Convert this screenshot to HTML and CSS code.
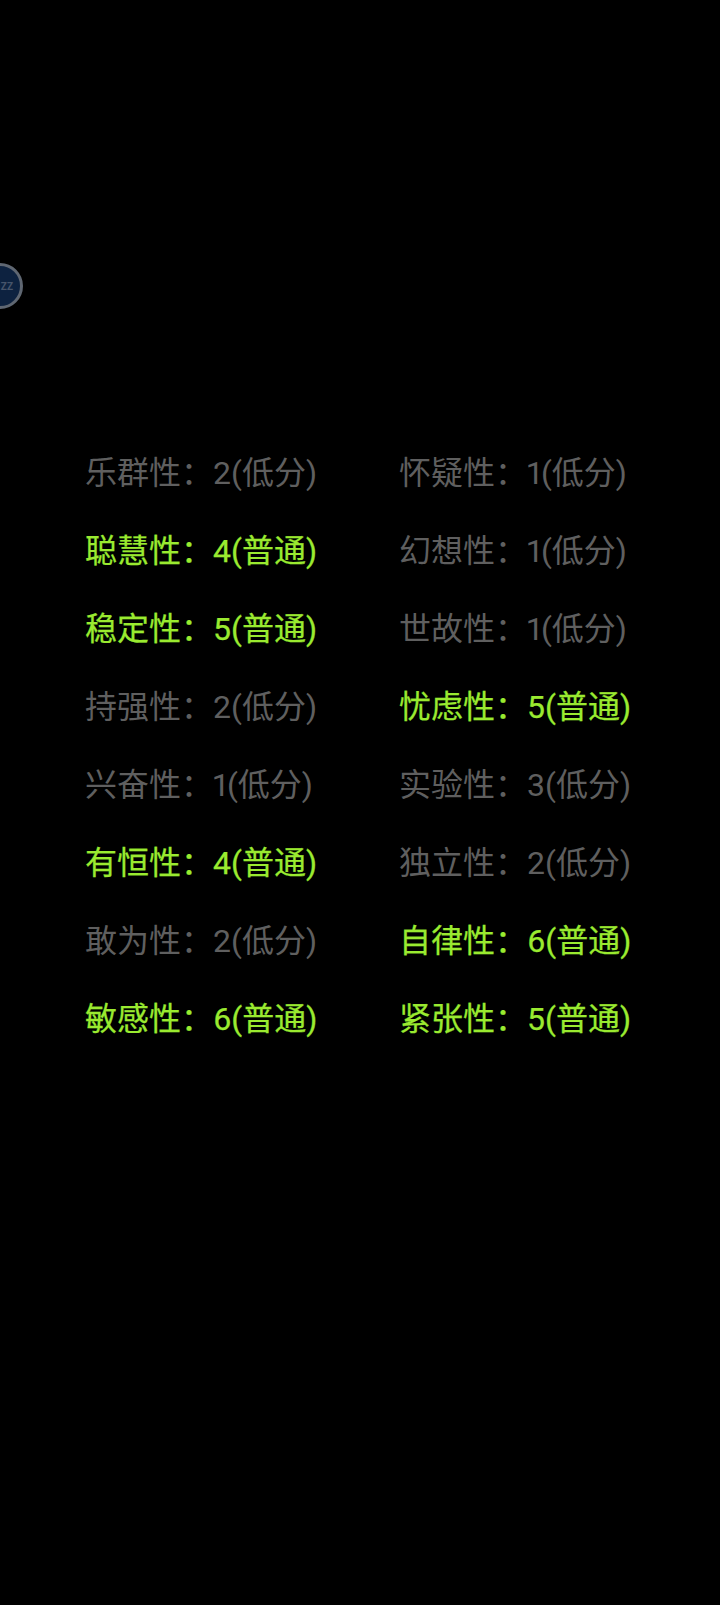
FILE: index.html
```html
<!DOCTYPE html>
<html lang="zh">
<head>
<meta charset="utf-8">
<title>性格因素</title>
<link rel="stylesheet" href="styles.css">
</head>
<body>
<div class="badge"><span class="badge-text">ZZ</span></div>
<main class="grid">
  <div class="cell low">乐群性：2(低分)</div>
  <div class="cell low">怀疑性：1(低分)</div>
  <div class="cell mid">聪慧性：4(普通)</div>
  <div class="cell low">幻想性：1(低分)</div>
  <div class="cell mid">稳定性：5(普通)</div>
  <div class="cell low">世故性：1(低分)</div>
  <div class="cell low">持强性：2(低分)</div>
  <div class="cell mid">忧虑性：5(普通)</div>
  <div class="cell low">兴奋性：1(低分)</div>
  <div class="cell low">实验性：3(低分)</div>
  <div class="cell mid">有恒性：4(普通)</div>
  <div class="cell low">独立性：2(低分)</div>
  <div class="cell low">敢为性：2(低分)</div>
  <div class="cell mid">自律性：6(普通)</div>
  <div class="cell mid">敏感性：6(普通)</div>
  <div class="cell mid">紧张性：5(普通)</div>
</main>
</body>
</html>
```
FILE: styles.css
```css
* { box-sizing: border-box; }
html, body { margin: 0; height: 100%; background: #000; overflow: hidden; }
body {
  position: relative;
  padding: 434px 0 0 85px;
  font-family: Roboto, "Noto Sans CJK SC", sans-serif;
}
.grid {
  display: grid;
  grid-template-columns: 314px 300px;
  grid-auto-rows: 78px;
}
.cell {
  display: flex;
  align-items: center;
  font-size: 32px;
  line-height: 78px;
  white-space: nowrap;
  font-variant-numeric: proportional-nums;
}
.low { color: #5f5f5f; }
.mid { color: #9aea30; -webkit-text-stroke: 0.25px #9aea30; }
.badge {
  position: absolute;
  left: -23px;
  top: 263px;
  width: 46px;
  height: 46px;
  border-radius: 50%;
  border: 3px solid #5f6772;
  background: #0d2240;
  display: flex;
  align-items: center;
  justify-content: flex-end;
  padding-right: 7px;
}
.badge-text { font-size: 10px; color: #46546a; font-weight: 700; }
```
